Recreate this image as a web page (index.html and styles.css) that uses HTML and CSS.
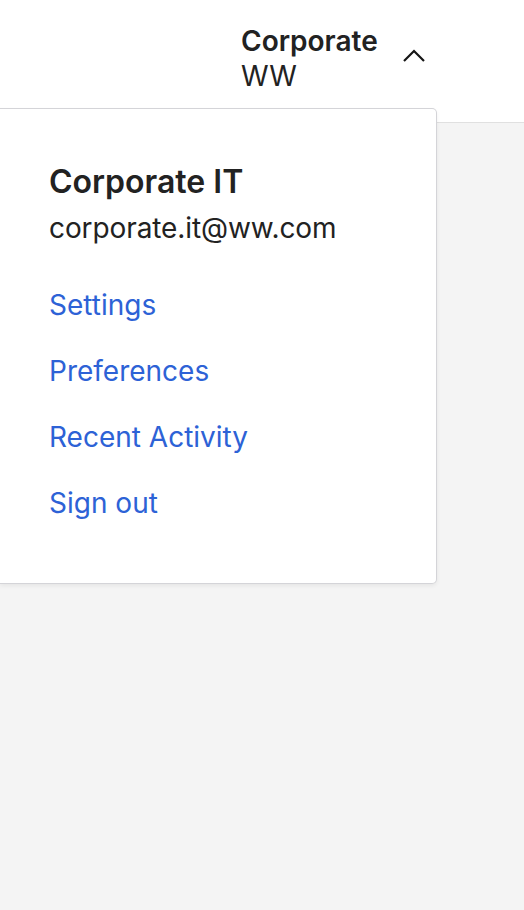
FILE: index.html
```html
<!DOCTYPE html>
<html lang="en">
<head>
    <meta charset="UTF-8">
    <meta name="viewport" content="width=device-width, initial-scale=1.0">
    <title>Account Menu</title>
    <link rel="stylesheet" href="styles.css">
</head>
<body>
    <header class="topbar">
        <button class="account-toggle" type="button">
            <span class="account-name">
                <strong>Corporate</strong>
                <span>WW</span>
            </span>
            <svg class="chevron" width="24" height="14" viewBox="0 0 24 14">
                <path d="M2 12 L12 2 L22 12" fill="none" stroke="#161616" stroke-width="2.2"/>
            </svg>
        </button>
    </header>

    <main class="content"></main>

    <div class="account-menu">
        <div class="account-info">
            <h2>Corporate IT</h2>
            <p>corporate.it@ww.com</p>
        </div>
        <ul class="menu-links">
            <li><a href="#">Settings</a></li>
            <li><a href="#">Preferences</a></li>
            <li><a href="#">Recent Activity</a></li>
            <li><a href="#">Sign out</a></li>
        </ul>
    </div>
</body>
</html>
```

FILE: styles.css
```css
html, body {
    height: 100%;
}

body {
    font-family: 'Inter', 'Noto Sans', sans-serif;
    margin: 0;
    padding: 0;
    background: #f4f4f4;
    color: #222;
}

.topbar {
    height: 122px;
    background: #fff;
    border-bottom: 1px solid #e0e0e0;
    box-sizing: content-box;
}

.account-toggle {
    display: flex;
    align-items: center;
    margin-left: 241px;
    padding: 24px 0 0 0;
    border: none;
    background: none;
    font-family: inherit;
    color: inherit;
    cursor: pointer;
    text-align: left;
}

.account-name {
    display: flex;
    flex-direction: column;
    font-size: 28px;
    line-height: 35px;
}

.account-name strong {
    font-weight: 600;
}

.chevron {
    margin-left: 24px;
    margin-top: -6px;
}

.account-menu {
    position: absolute;
    top: 108px;
    left: 0;
    width: 437px;
    height: 476px;
    background: #fff;
    border: 1px solid #d4d4d8;
    border-left: none;
    border-radius: 0 5px 5px 0;
    box-shadow: 0 2px 4px rgba(0, 0, 0, 0.06);
    padding: 53px 0 0 49px;
    box-sizing: border-box;
}

.account-info h2 {
    margin: 0;
    font-size: 32px;
    font-weight: 600;
    line-height: 40px;
}

.account-info p {
    margin: 9px 0 0 0;
    font-size: 28px;
    line-height: 35px;
    letter-spacing: -0.1px;
}

.menu-links {
    list-style: none;
    margin: 42px 0 0 0;
    padding: 0;
}

.menu-links li {
    height: 66px;
}

.menu-links a {
    font-size: 28px;
    line-height: 35px;
    color: #2d62d6;
    text-decoration: none;
}
```
